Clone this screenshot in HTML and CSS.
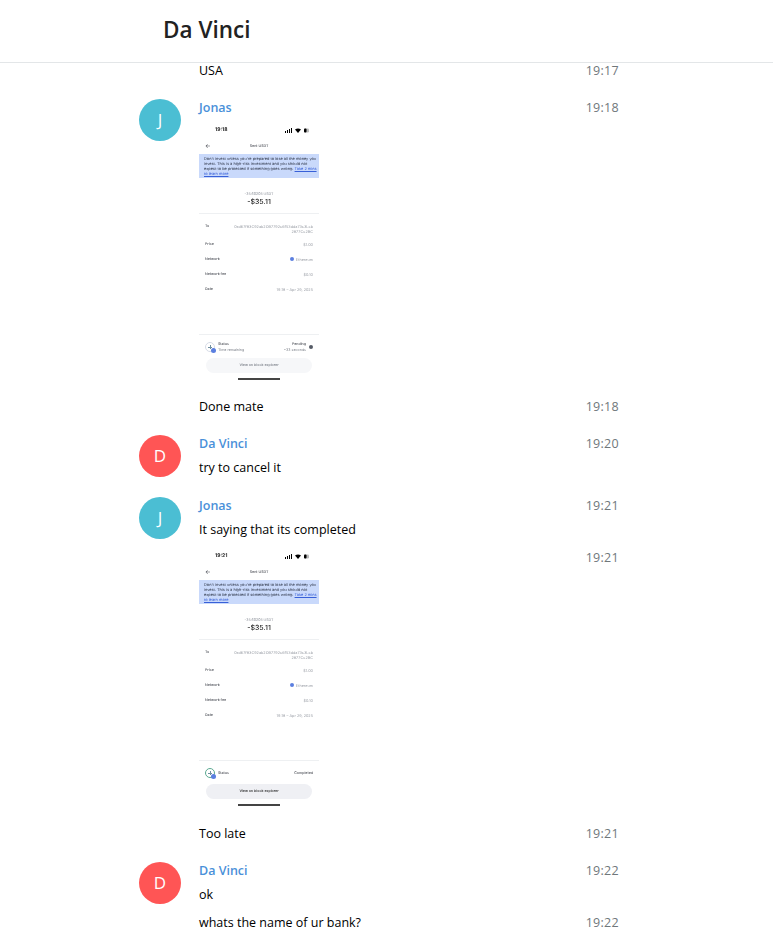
FILE: index.html
```html
<!DOCTYPE html>
<html lang="en">
<head>
  <meta charset="UTF-8">
  <title>Da Vinci</title>
  <link rel="stylesheet" href="styles.css">
</head>
<body>
  <header class="page-header">
    <h1>Da Vinci</h1>
  </header>

  <main class="history">
    <div class="joined first">
      <div class="text">USA</div>
      <div class="date">19:17</div>
    </div>

    <div class="group">
      <div class="userpic jonas">J</div>
      <div class="body">
        <div class="line">
          <div class="from-name">Jonas</div>
          <div class="date">19:18</div>
        </div>
        <div class="phone">
          <div class="status-bar">
            <span>19:18</span>
            <svg class="status-icons" viewBox="0 0 24 5"><path d="M0 5V3h1v2zM2 5V2h1v3zM4 5V1h1v4zM6 5V0h1v5z"/><path d="M10 1.500q3-2 6 0l-3 3.500z"/><rect x="19" y=".5" width="5" height="4" rx="1.300" fill="#bbb"/><rect x="19" y=".5" width="2.500" height="4" rx="1"/></svg>
          </div>
          <div class="nav-bar"><span class="back">←</span><b>Sent USDT</b></div>
          <div class="warning">Don't invest unless you're prepared to lose all the money you<br>invest. This is a high-risk investment and you should not<br>expect to be protected if something goes wrong. <u>Take 2 mins</u><br><u>to learn more</u></div>
          <div class="amount">
            <small>-35.60205 USDT</small>
            <strong>-$35.11</strong>
          </div>
          <div class="details">
            <div class="detail tall"><b>To</b><span>0xd67f83C92ab2OB7792c6f53dda73c3Lcb<br>2877Cc2BC</span></div>
            <div class="detail"><b>Price</b><span>$1.00</span></div>
            <div class="detail"><b>Network</b><span><i class="eth"></i> Ethereum</span></div>
            <div class="detail"><b>Network fee</b><span>$0.10</span></div>
            <div class="detail"><b>Date</b><span>19:18 – Apr 29, 2025</span></div>
          </div>
          <div class="footer">
            <div class="tx-status">
              <i class="spinner pending"></i>
              <div class="tx-label"><b>Status</b><span>Time remaining</span></div>
              <div class="tx-value"><b>Pending</b><span>~33 seconds</span></div>
              <i class="info"></i>
            </div>
            <div class="explorer pale">View on block explorer</div>
            <div class="home-bar"></div>
          </div>
        </div>
      </div>
    </div>

    <div class="joined">
      <div class="text">Done mate</div>
      <div class="date">19:18</div>
    </div>

    <div class="group">
      <div class="userpic davinci">D</div>
      <div class="body">
        <div class="line">
          <div class="from-name">Da Vinci</div>
          <div class="date">19:20</div>
        </div>
        <div class="text">try to cancel it</div>
      </div>
    </div>

    <div class="group">
      <div class="userpic jonas">J</div>
      <div class="body">
        <div class="line">
          <div class="from-name">Jonas</div>
          <div class="date">19:21</div>
        </div>
        <div class="text">It saying that its completed</div>
      </div>
    </div>

    <div class="joined photo-row">
      <div class="phone">
        <div class="status-bar">
          <span>19:21</span>
          <svg class="status-icons" viewBox="0 0 24 5"><path d="M0 5V3h1v2zM2 5V2h1v3zM4 5V1h1v4zM6 5V0h1v5z"/><path d="M10 1.500q3-2 6 0l-3 3.500z"/><rect x="19" y=".5" width="5" height="4" rx="1.300" fill="#bbb"/><rect x="19" y=".5" width="2.500" height="4" rx="1"/></svg>
        </div>
        <div class="nav-bar"><span class="back">←</span><b>Sent USDT</b></div>
        <div class="warning">Don't invest unless you're prepared to lose all the money you<br>invest. This is a high-risk investment and you should not<br>expect to be protected if something goes wrong. <u>Take 2 mins</u><br><u>to learn more</u></div>
        <div class="amount">
          <small>-35.60205 USDT</small>
          <strong>-$35.11</strong>
        </div>
        <div class="details">
          <div class="detail tall"><b>To</b><span>0xd67f83C92ab2OB7792c6f53dda73c3Lcb<br>2877Cc2BC</span></div>
          <div class="detail"><b>Price</b><span>$1.00</span></div>
          <div class="detail"><b>Network</b><span><i class="eth"></i> Ethereum</span></div>
          <div class="detail"><b>Network fee</b><span>$0.10</span></div>
          <div class="detail"><b>Date</b><span>19:18 – Apr 29, 2025</span></div>
        </div>
        <div class="footer">
          <div class="tx-status">
            <i class="spinner done"></i>
            <div class="tx-label"><b>Status</b></div>
            <div class="tx-value"><b>Completed</b></div>
          </div>
          <div class="explorer">View on block explorer</div>
          <div class="home-bar"></div>
        </div>
      </div>
      <div class="date">19:21</div>
    </div>

    <div class="joined">
      <div class="text">Too late</div>
      <div class="date">19:21</div>
    </div>

    <div class="group">
      <div class="userpic davinci">D</div>
      <div class="body">
        <div class="line">
          <div class="from-name">Da Vinci</div>
          <div class="date">19:22</div>
        </div>
        <div class="text">ok</div>
      </div>
    </div>

    <div class="joined">
      <div class="text">whats the name of ur bank?</div>
      <div class="date">19:22</div>
    </div>
  </main>
</body>
</html>
```

FILE: styles.css
```css
* {
  box-sizing: border-box;
  margin: 0;
  padding: 0;
}

html, body {
  height: 941px;
  overflow: hidden;
}

body {
  background: #ffffff;
  color: #000000;
  font-family: "Open Sans", sans-serif;
  font-size: 12.5px;
  line-height: 17px;
}

.page-header {
  height: 63px;
  padding: 17px 0 0 163px;
  border-bottom: 1px solid #e3e6e8;
}

.page-header h1 {
  color: #222222;
  font-size: 22.5px;
  line-height: 26px;
  font-weight: 600;
}

.history {
  width: 480px;
  margin-left: 139px;
}

/* one avatar + name block */
.group {
  display: flex;
  gap: 18px;
  margin-top: 20px;
}

.userpic {
  flex: none;
  width: 42px;
  height: 42px;
  border-radius: 50%;
  color: #ffffff;
  font-size: 17px;
  line-height: 42px;
  text-align: center;
}

.jonas { background: #4bbed3; }
.davinci { background: #ff5555; }

.body {
  flex: 1;
  min-width: 0;
}

.line {
  display: flex;
  justify-content: space-between;
}

.from-name {
  color: #4a90d9;
  font-weight: 600;
}

.date {
  color: #70777b;
  letter-spacing: 0.3px;
}

.body .text {
  margin-top: 7px;
}

/* follow-up message without avatar */
.joined {
  display: flex;
  justify-content: space-between;
  margin-top: 12px;
  padding-left: 60px;
}

.joined.first {
  margin-top: -1px;
}

.group + .joined, .photo-row + .joined {
  margin-top: 10px;
}

/* phone screenshots */
.phone {
  display: flex;
  flex-direction: column;
  width: 120px;
  height: 261px;
  margin: 8px 0 3px;
  color: #4a4d55;
  font-family: Inter, sans-serif;
  font-size: 3.600px;
  line-height: 5px;
  text-rendering: geometricPrecision;
  filter: blur(0.3px);
}

.photo-row .phone {
  margin: 1px 0 4px;
}

.phone b {
  font-weight: 500;
}

.status-bar {
  display: flex;
  justify-content: space-between;
  align-items: center;
  height: 5px;
  margin-top: 4px;
  padding: 0 10px 0 16px;
  color: #222222;
  font-size: 5px;
  font-weight: 700;
}

.status-icons {
  width: 24px;
  height: 5px;
}

.nav-bar {
  position: relative;
  margin-top: 11px;
  text-align: center;
}

.back {
  position: absolute;
  left: 6px;
  font-size: 6px;
}

.warning {
  height: 24px;
  margin-top: 5px;
  padding: 2px 5px;
  background: #c9d9fb;
  color: #30384a;
  font-size: 3.900px;
  line-height: 5px;
  white-space: nowrap;
}

.warning u {
  color: #3860d8;
}

.amount {
  display: flex;
  flex-direction: column;
  align-items: center;
  height: 36px;
  padding: 14px 0 0;
  border-bottom: 1px solid #eef0f2;
}

.amount small {
  color: #8a8f98;
  font-size: 3.600px;
  line-height: 5px;
}

.amount strong {
  color: #222222;
  font-size: 7px;
  line-height: 10px;
  font-weight: 500;
}

.details {
  padding: 10px 6px 0;
}

.detail {
  display: flex;
  justify-content: space-between;
  height: 15px;
}

.detail.tall {
  height: 17.500px;
}

.detail span {
  color: #9a9ea6;
  font-size: 3.800px;
  text-align: right;
  white-space: nowrap;
}

.eth {
  display: inline-block;
  width: 4px;
  height: 4px;
  margin-right: 1px;
  border-radius: 50%;
  background: #5b7fe0;
}

.footer {
  margin-top: auto;
  border-top: 1px solid #eef0f2;
}

.tx-status {
  display: flex;
  align-items: center;
  gap: 3px;
  height: 20px;
  margin: 2px 6px 0;
}

.spinner {
  position: relative;
  flex: none;
  width: 10px;
  height: 10px;
  border-radius: 50%;
  border: 1px solid #d6dbe6;
}

.spinner.done {
  border-color: #5aa890;
}

/* little plus inside the ring */
.spinner::before {
  content: "";
  position: absolute;
  top: 2px;
  left: 2px;
  width: 4px;
  height: 4px;
  background:
    linear-gradient(#6f8fa0, #6f8fa0) center / 100% 1px no-repeat,
    linear-gradient(#6f8fa0, #6f8fa0) center / 1px 100% no-repeat;
}

.spinner::after {
  content: "";
  position: absolute;
  right: -2px;
  bottom: -2px;
  width: 5px;
  height: 5px;
  border-radius: 50%;
  background: #5b7fe0;
}

.tx-label, .tx-value {
  display: flex;
  flex-direction: column;
  line-height: 6px;
}

.tx-label span, .tx-value span {
  color: #777c85;
}

.tx-value {
  margin-left: auto;
  align-items: flex-end;
}

.info {
  flex: none;
  width: 4px;
  height: 4px;
  border-radius: 50%;
  background: #555b66;
}

.explorer {
  height: 15px;
  margin: 1px 7px 0;
  border-radius: 8px;
  background: #eff0f4;
  color: #222222;
  font-weight: 500;
  line-height: 15px;
  text-align: center;
}

.explorer.pale {
  background: #f6f7f9;
  color: #777c85;
}

.home-bar {
  width: 42px;
  height: 2px;
  margin: 5px auto 5px;
  background: #444444;
}
```
